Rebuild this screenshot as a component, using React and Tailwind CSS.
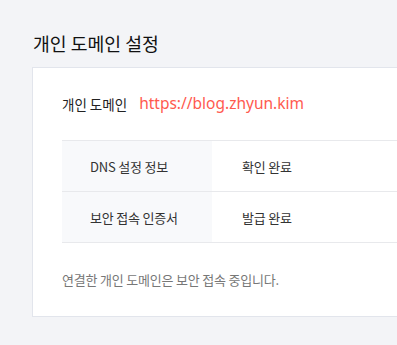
export default function App() {
    const rows = [
        { label: "DNS 설정 정보", value: "확인 완료" },
        { label: "보안 접속 인증서", value: "발급 완료" },
    ];

    return (
        <div
            className="h-[345px] w-[397px] overflow-hidden bg-[#f3f4f7] pl-8 pt-[31px]"
            style={{ fontFamily: '"Noto Sans CJK KR", "Noto Sans", sans-serif' }}
        >
            <h1 className="pl-px text-[18.3px] leading-[24px] text-[#111]">개인 도메인 설정</h1>

            <div className="mt-[12px] h-[250px] w-[500px] border border-[#e2e5ec] bg-white pl-[29px] pt-[24px]">
                <div className="flex items-center gap-[12px]">
                    <span className="text-[13.5px] text-[#222]">개인 도메인</span>
                    <span className="text-[15.5px] text-[#ff5a4f]" style={{ fontFamily: '"Noto Sans", sans-serif' }}>
                        https://blog.zhyun.kim
                    </span>
                </div>

                <table className="mt-[25px] w-full border-t border-[#e8e9ec] text-left text-[13px] text-[#333]">
                    <tbody>
                        {rows.map((r) => (
                            <tr key={r.label} className="h-[51px] border-b border-[#e8e9ec]">
                                <td className="w-[150px] bg-[#f8f9fb] pl-[28px] tracking-[-0.2px]">{r.label}</td>
                                <td className="pl-[30px] tracking-[-0.2px]">{r.value}</td>
                            </tr>
                        ))}
                    </tbody>
                </table>

                <p className="mt-[27px] text-[13px] text-[#777] tracking-[-0.2px]">
                    연결한 개인 도메인은 보안 접속 중입니다.
                </p>
            </div>
        </div>
    );
}
